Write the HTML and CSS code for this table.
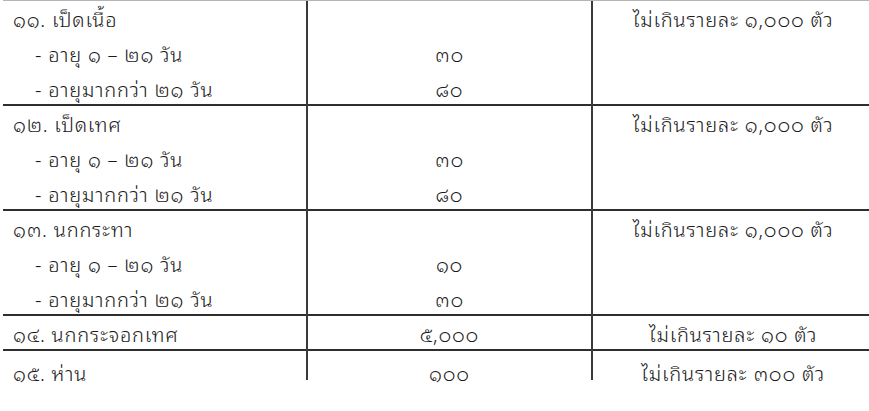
FILE: index.html
```html
<!DOCTYPE html>
<html lang="th">
<head>
<meta charset="utf-8">
<title>ตาราง</title>
<link rel="stylesheet" href="styles.css">
</head>
<body>
<div class="table">
  <div class="group">
    <div class="c1">๑๑. เป็ดเนื้อ</div><div class="c2"></div><div class="c3">ไม่เกินรายละ ๑,๐๐๐ ตัว</div>
    <div class="c1 sub">- อายุ ๑ – ๒๑ วัน</div><div class="c2">๓๐</div><div class="c3"></div>
    <div class="c1 sub">- อายุมากกว่า ๒๑ วัน</div><div class="c2">๘๐</div><div class="c3"></div>
  </div>
  <div class="group">
    <div class="c1">๑๒. เป็ดเทศ</div><div class="c2"></div><div class="c3">ไม่เกินรายละ ๑,๐๐๐ ตัว</div>
    <div class="c1 sub">- อายุ ๑ – ๒๑ วัน</div><div class="c2">๓๐</div><div class="c3"></div>
    <div class="c1 sub">- อายุมากกว่า ๒๑ วัน</div><div class="c2">๘๐</div><div class="c3"></div>
  </div>
  <div class="group">
    <div class="c1">๑๓. นกกระทา</div><div class="c2"></div><div class="c3">ไม่เกินรายละ ๑,๐๐๐ ตัว</div>
    <div class="c1 sub">- อายุ ๑ – ๒๑ วัน</div><div class="c2">๑๐</div><div class="c3"></div>
    <div class="c1 sub">- อายุมากกว่า ๒๑ วัน</div><div class="c2">๓๐</div><div class="c3"></div>
  </div>
  <div class="group single">
    <div class="c1">๑๔. นกกระจอกเทศ</div><div class="c2">๕,๐๐๐</div><div class="c3">ไม่เกินรายละ ๑๐ ตัว</div>
  </div>
  <div class="group last">
    <div class="c1">๑๕. ห่าน</div><div class="c2">๑๐๐</div><div class="c3">ไม่เกินรายละ ๓๐๐ ตัว</div>
  </div>
</div>
</body>
</html>
```

FILE: styles.css
```css
html {
  margin: 0;
  padding: 0;
  background: #ffffff;
  overflow: hidden;
}
body {
  margin: 0;
  padding: 0;
  min-height: 411px;
  font-family: "Noto Sans Thai Looped", "Noto Sans Thai", "Loma", "Garuda", "Norasi", "Noto Sans", sans-serif;
  font-size: 20px;
  font-weight: 360;
  letter-spacing: 0.8px;
  color: #1a1a1a;
}
.table {
  margin-left: 3px;
  border-top: 1px solid #b5b5b5;
}
.group {
  display: grid;
  grid-template-columns: 303px 285px 1fr;
  grid-auto-rows: 35px;
  height: 105px;
  box-sizing: border-box;
  border-bottom: 2px solid #2e2e2e;
}
.group.single {
  height: 35px;
}
.group.last {
  height: 29px;
  border-bottom: none;
  grid-auto-rows: 29px;
}
.c1, .c2, .c3 {
  line-height: 35px;
  white-space: nowrap;
  overflow: visible;
}
.c1 {
  padding-left: 10px;
}
.c1.sub {
  padding-left: 32px;
}
.c2 {
  border-left: 2px solid #3a3a3a;
  text-align: center;
}
.c3 {
  border-left: 2px solid #3a3a3a;
  text-align: center;
  padding-left: 4px;
}
.last .c1, .last .c2, .last .c3 {
  padding-top: 4px;
}
```
